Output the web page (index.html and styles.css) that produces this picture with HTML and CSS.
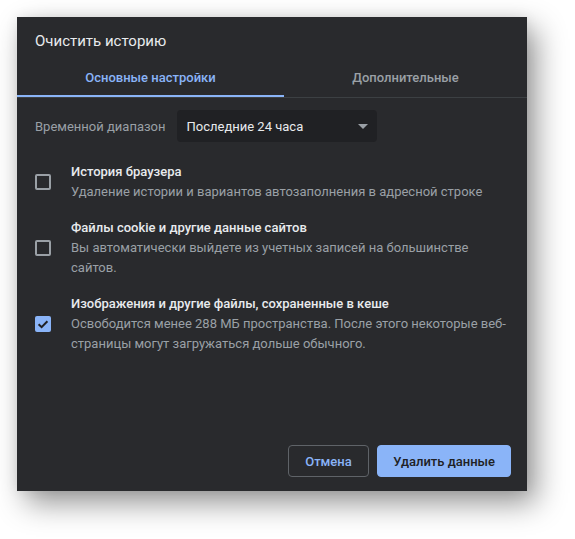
FILE: index.html
```html
<!DOCTYPE html>
<html lang="ru">
<head>
<meta charset="utf-8">
<link rel="stylesheet" href="styles.css">
</head>
<body>
<div class="dialog">
  <div class="title">Очистить историю</div>
  <div class="tabs">
    <div class="tab active">Основные настройки</div>
    <div class="tab">Дополнительные</div>
  </div>
  <div class="body">
    <div class="range">
      <span class="range-label">Временной диапазон</span>
      <div class="select">
        <span>Последние 24 часа</span>
        <span class="arrow"></span>
      </div>
    </div>
    <div class="item">
      <div class="check"></div>
      <div class="text">
        <div class="item-title">История браузера</div>
        <div class="item-desc">Удаление истории и вариантов автозаполнения в адресной строке</div>
      </div>
    </div>
    <div class="item">
      <div class="check"></div>
      <div class="text">
        <div class="item-title">Файлы cookie и другие данные сайтов</div>
        <div class="item-desc">Вы автоматически выйдете из учетных записей на большинстве сайтов.</div>
      </div>
    </div>
    <div class="item">
      <div class="check checked">
        <svg viewBox="0 0 16 16" width="16" height="16"><path d="M3.6 8.2 L6.6 11.1 L12.4 5.2" fill="none" stroke="#202124" stroke-width="2"/></svg>
      </div>
      <div class="text">
        <div class="item-title">Изображения и другие файлы, сохраненные в кеше</div>
        <div class="item-desc">Освободится менее 288 МБ пространства. После этого некоторые веб-страницы могут загружаться дольше обычного.</div>
      </div>
    </div>
  </div>
  <div class="footer">
    <button class="btn cancel">Отмена</button>
    <button class="btn primary">Удалить данные</button>
  </div>
</div>
</body>
</html>
```

FILE: styles.css
```css
html, body {
  margin: 0;
  padding: 0;
  background: #ffffff;
}
body {
  font-family: Roboto, "Liberation Sans", sans-serif;
  font-size: 13px;
  padding: 17px 0 0 17px;
  min-height: 539px;
  box-sizing: border-box;
}
.dialog {
  width: 510px;
  height: 474px;
  background: #292a2d;
  display: flex;
  flex-direction: column;
  box-shadow: 9px 12px 28px rgba(0, 0, 0, 0.42), 0 0 12px rgba(0, 0, 0, 0.08);
  color: #e8eaed;
}
.title {
  font-size: 15px;
  line-height: 20px;
  padding: 14px 18px 6px;
  color: #e8eaed;
}
.tabs {
  display: flex;
  border-bottom: 1px solid #3c4043;
}
.tab {
  flex: 1 1 auto;
  height: 40px;
  display: flex;
  align-items: center;
  justify-content: center;
  font-weight: 500;
  color: #9aa0a6;
  box-sizing: border-box;
}
.tab.active {
  color: #8ab4f8;
  border-bottom: 2px solid #8ab4f8;
  padding-top: 2px;
}
.body {
  flex: 1;
  padding: 12px 16px 0 18px;
}
.range {
  display: flex;
  align-items: center;
  gap: 12px;
  margin-bottom: 12px;
}
.range-label {
  color: #9aa0a6;
}
.select {
  width: 200px;
  height: 32px;
  box-sizing: border-box;
  background: #202124;
  border-radius: 4px;
  display: flex;
  align-items: center;
  justify-content: space-between;
  padding: 0 8px 0 9px;
  color: #e8eaed;
}
.arrow {
  width: 0;
  height: 0;
  border-left: 5px solid transparent;
  border-right: 5px solid transparent;
  border-top: 5px solid #9aa0a6;
  margin-right: 1px;
}
.item {
  display: flex;
  align-items: center;
  padding: 8px 0;
}
.check {
  width: 16px;
  height: 16px;
  box-sizing: border-box;
  border: 2px solid #9aa0a6;
  border-radius: 2px;
  flex: none;
  margin-right: 20px;
}
.check.checked {
  border: none;
  background: #8ab4f8;
}
.check svg {
  display: block;
}
.text {
  line-height: 20px;
}
.item-title {
  font-weight: 500;
  color: #e8eaed;
}
.item-desc {
  color: #9aa0a6;
}
.footer {
  display: flex;
  justify-content: flex-end;
  gap: 8px;
  padding: 0 16px 14px;
}
.btn {
  height: 32px;
  font-family: Roboto, "Liberation Sans", sans-serif;
  font-size: 13px;
  font-weight: 500;
  border-radius: 4px;
  box-sizing: border-box;
}
.cancel {
  background: transparent;
  border: 1px solid #5f6368;
  color: #8ab4f8;
  padding: 0 16.5px;
}
.primary {
  background: #8ab4f8;
  border: 1px solid #8ab4f8;
  color: #202124;
  padding: 0 15px;
}
```
